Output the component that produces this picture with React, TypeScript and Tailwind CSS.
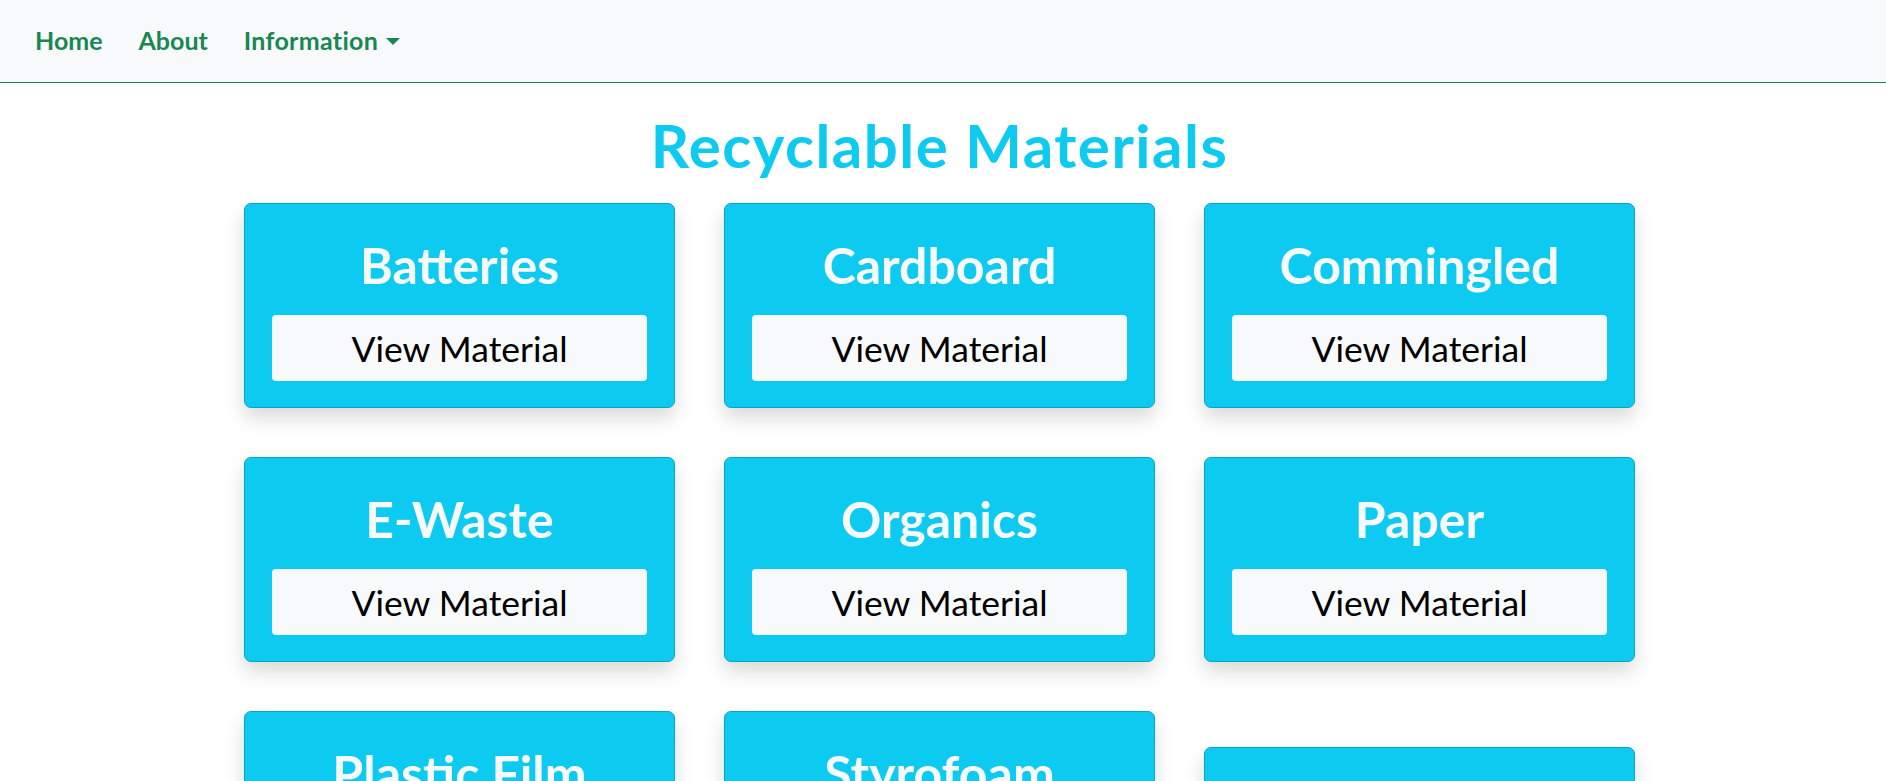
const materials = [
  "Batteries",
  "Cardboard",
  "Commingled",
  "E-Waste",
  "Organics",
  "Paper",
  "Plastic Film",
  "Styrofoam",
  "Textiles",
]

const font = { fontFamily: 'Lato, "Open Sans", sans-serif' }

function MaterialCard({ name, offset = false }: { name: string; offset?: boolean }) {
  return (
    <article
      className={
        offset
          ? "mt-[36px] self-start rounded-[7px] border border-[#0ba5c4] bg-[#0dcaf0] px-[27px] pt-[31px] pb-[26px] shadow-[0_10px_20px_rgba(0,0,0,0.15)]"
          : "self-start rounded-[7px] border border-[#0ba5c4] bg-[#0dcaf0] px-[27px] pt-[31px] pb-[26px] shadow-[0_10px_20px_rgba(0,0,0,0.15)]"
      }
    >
      <h2 className="mb-[20px] text-center text-[50px] leading-[60px] font-bold text-[#f8f9fa]">{name}</h2>
      <button className="flex h-[66px] w-full items-center justify-center rounded-[4px] bg-[#f8f9fa] pt-[2px] text-[35.5px] leading-[54px] text-black">
        View Material
      </button>
    </article>
  )
}

export default function App() {
  return (
    <div className="min-h-screen bg-white" style={font}>
      <nav className="flex h-[83px] items-center border-b border-[#198754] bg-[#f8f9fa] pl-[17px]">
        <a className="px-[18px] text-[25px] font-bold text-[#198754]">Home</a>
        <a className="px-[18px] text-[25px] font-bold text-[#198754]">About</a>
        <a className="flex items-center px-[18px] text-[25px] font-bold tracking-[0.3px] text-[#198754]">
          Information
          <span className="ml-[8px] h-0 w-0 border-x-[7px] border-t-[7px] border-x-transparent border-t-[#198754]" />
        </a>
      </nav>

      <main className="flex justify-center pr-[7px]">
        <div className="w-[1391px]">
          <h1 className="mt-[26px] mb-[22px] text-center text-[60px] leading-[72px] font-bold tracking-[1.5px] text-[#0dcaf0]">
            Recyclable Materials
          </h1>
          <div className="grid grid-cols-3 gap-[49px] pb-12">
            {materials.map((m, i) => (
              <MaterialCard key={m} name={m} offset={i === 8} />
            ))}
          </div>
        </div>
      </main>
    </div>
  )
}
